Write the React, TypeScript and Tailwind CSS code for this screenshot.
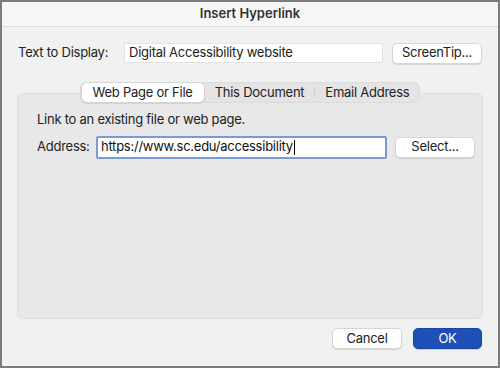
import React from 'react';

const font = { fontFamily: 'Inter, "Noto Sans", sans-serif' };

const Button: React.FC<{ label: string; className?: string; primary?: boolean }> = ({ label, className = '', primary }) => (
  <div
    className={
      'flex h-[21px] items-center justify-center rounded-[5px] text-[13px] ' +
      (primary
        ? 'bg-[#1f4fb8] text-white border border-[#1a44a3] shadow-[0_1px_1px_rgba(0,0,0,0.15)] '
        : 'bg-white text-[#222] border border-[#d6d6d6] shadow-[0_1px_1px_rgba(0,0,0,0.12)] ') +
      className
    }
  >
    {label}
  </div>
);

export default function App() {
  return (
    <div className="w-[500px] h-[368px] bg-[#7c7c7c] p-[2px] tracking-[-0.25px]" style={font}>
      <div className="flex h-full flex-col bg-[#f0f1f1]">
        {/* title */}
        <div className="flex h-[25px] items-center justify-center border-b border-[#d9dadb] bg-[#f6f6f7] text-[13px] font-semibold tracking-normal text-[#333]">
          Insert Hyperlink
        </div>

        {/* text to display */}
        <div className="mt-[16px] flex h-[20px] items-center pl-[16px] pr-[16px]">
          <span className="w-[106px] text-[13px] text-[#222]">Text to Display:</span>
          <div className="flex h-[20px] w-[259px] items-center border border-[#e2e2e2] bg-white pl-[4px] text-[13px] text-[#222]">
            Digital Accessibility website
          </div>
          <Button label="ScreenTip..." className="ml-[9px] w-[90px]" />
        </div>

        {/* group box */}
        <div className="mx-[15px] mt-[30px] flex h-[226px] flex-col rounded-[6px] border border-[#e0e0e0] bg-[#e8e8e8]">
          <div className="-mt-[12px] flex justify-center">
            <div className="flex h-[21px] items-center rounded-[6px] border border-[#dcdcdc] bg-[#e4e4e4] text-[13px] text-[#222]">
              <div className="flex h-[21px] items-center rounded-[6px] border border-[#d4d4d4] bg-white px-[11px] shadow-[0_1px_1px_rgba(0,0,0,0.1)]">
                Web Page or File
              </div>
              <div className="px-[10px]">This Document</div>
              <div className="h-[11px] w-px bg-[#cfcfcf]" />
              <div className="px-[10px]">Email Address</div>
            </div>
          </div>

          <div className="mt-[7px] pl-[19px] text-[13px] text-[#222]">Link to an existing file or web page.</div>

          <div className="mt-[6px] flex items-center pl-[19px]">
            <span className="w-[59px] text-[13px] text-[#222]">Address:</span>
            <div className="flex h-[23px] w-[291px] items-center rounded-[2px] border-[2px] border-[#7a9ad6] bg-white pl-[3px] text-[13px] text-[#111]">
              https://www.sc.edu/accessibility
              <span className="ml-[1px] h-[15px] w-[1px] bg-black" />
            </div>
            <Button label="Select..." className="ml-[8px] w-[80px]" />
          </div>
        </div>

        {/* bottom buttons */}
        <div className="mt-[9px] flex justify-end pr-[16px]">
          <Button label="Cancel" className="w-[70px]" />
          <Button label="OK" primary className="ml-[11px] w-[69px]" />
        </div>
      </div>
    </div>
  );
}
